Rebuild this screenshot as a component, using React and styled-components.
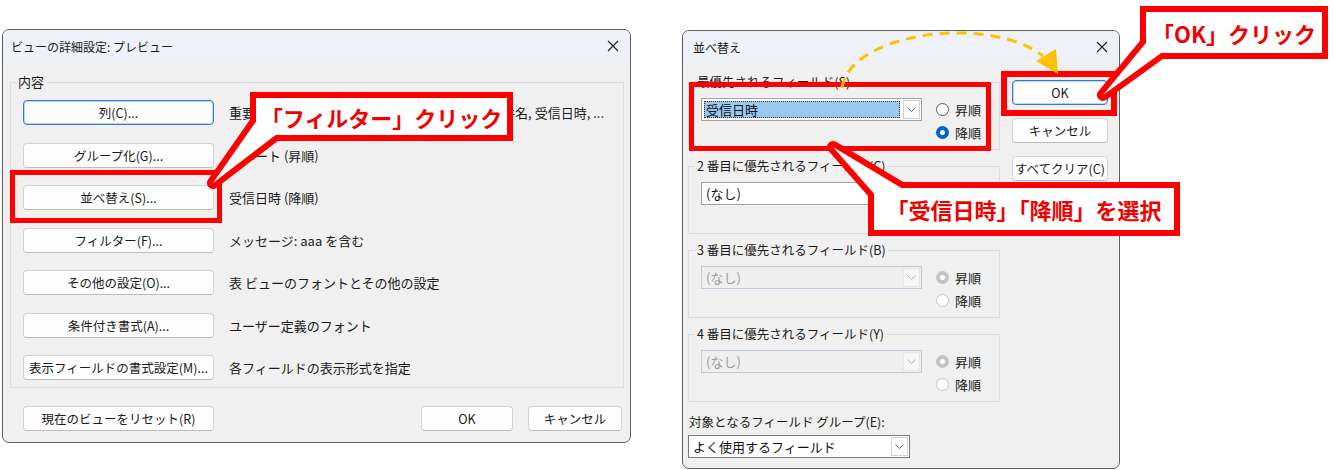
import React from 'react';
import styled, { createGlobalStyle } from 'styled-components';

const GlobalStyle = createGlobalStyle`
  html, body {
    margin: 0;
    padding: 0;
    background: #ffffff;
  }
  body {
    font-family: "Noto Sans CJK JP", "Noto Sans", sans-serif;
    font-size: 12px;
    color: #1a1a1a;
  }
`;

const Page = styled.div`
  position: relative;
  width: 1334px;
  height: 470px;
  overflow: hidden;
  box-sizing: border-box;
  display: flex;
  align-items: flex-start;
  gap: 51px;
  padding: 29px 0 0 2px;
`;

const Dialog = styled.div`
  width: ${p => p.$w}px;
  height: ${p => p.$h}px;
  margin-top: ${p => p.$top || 0}px;
  box-sizing: border-box;
  border: 1px solid #5f5f5f;
  border-radius: 7px;
  background: #f0f0f0;
  overflow: hidden;
  display: flex;
  flex-direction: column;
  flex: none;
`;

const TitleBar = styled.div`
  height: 32px;
  flex: none;
  display: flex;
  align-items: center;
  justify-content: space-between;
  padding: 0 11px 0 ${p => p.$pad || 8}px;
  background: #eef2f8;
  font-size: 12px;
  color: #1a1a1a;
`;

const CloseIcon = () => (
  <svg width="12" height="12" viewBox="0 0 12 12">
    <path d="M1 1 L11 11 M11 1 L1 11" stroke="#222" strokeWidth="1.1" fill="none" />
  </svg>
);

const Chevron = ({ color = '#666' }) => (
  <svg width="9" height="5" viewBox="0 0 9 5">
    <path d="M0.5 0.5 L4.5 4.5 L8.5 0.5" stroke={color} strokeWidth="1" fill="none" />
  </svg>
);

/* ---------- left dialog ---------- */

const ViewBody = styled.div`
  display: flex;
  flex-direction: column;
  padding: 12px 6px 0 7px;
`;

const GroupBox = styled.fieldset`
  margin: 0;
  padding: 0;
  min-width: 0;
  border: 1px solid #dcdcdc;
  width: ${p => (p.$w ? `${p.$w}px` : 'auto')};
  box-sizing: border-box;
`;

const Legend = styled.legend`
  margin-left: ${p => p.$indent || 5}px;
  padding: 0 2px;
  font-size: ${p => p.$size || 13}px;
  line-height: 16px;
  color: #1a1a1a;
`;

const SettingsGrid = styled.div`
  display: grid;
  grid-template-columns: 191px 1fr;
  grid-auto-rows: 25px;
  column-gap: 15px;
  row-gap: 17.5px;
  padding: 10px 8px 7px 12px;
`;

const PushButton = styled.div`
  width: ${p => (p.$w ? `${p.$w}px` : 'auto')};
  height: 25px;
  box-sizing: border-box;
  display: flex;
  align-items: center;
  justify-content: center;
  background: #fdfdfd;
  border: 1px solid ${p => (p.$default ? '#2f7fd0' : '#d3d3d3')};
  border-bottom-color: ${p => (p.$default ? '#2f7fd0' : '#bdbdbd')};
  box-shadow: ${p => (p.$default ? 'inset 0 0 0 1px #b9d5f1' : 'none')};
  border-radius: 4px;
  font-size: 12.5px;
  color: #1a1a1a;
  white-space: nowrap;
`;

const Description = styled.div`
  align-self: center;
  font-size: 13px;
  white-space: nowrap;
  overflow: hidden;
  color: #1a1a1a;
`;

const Footer = styled.div`
  display: flex;
  justify-content: space-between;
  margin-top: 18px;
  padding: 0 2px 0 13px;
`;

const FooterRight = styled.div`
  display: flex;
  gap: 15px;
`;

const settings = [
  { label: '列(C)...', desc: '重要度, フラグの状態, 添付ファイル, 差出人名, 件名, 受信日時, ...', focus: true },
  { label: 'グループ化(G)...', desc: 'レポート (昇順)' },
  { label: '並べ替え(S)...', desc: '受信日時 (降順)' },
  { label: 'フィルター(F)...', desc: 'メッセージ: aaa を含む' },
  { label: 'その他の設定(O)...', desc: '表 ビューのフォントとその他の設定' },
  { label: '条件付き書式(A)...', desc: 'ユーザー定義のフォント' },
  { label: '表示フィールドの書式設定(M)...', desc: '各フィールドの表示形式を指定' },
];

/* ---------- right dialog ---------- */

const SortBody = styled.div`
  display: flex;
  gap: 12px;
  padding: 11px 11px 0 5px;
`;

const SortColumn = styled.div`
  width: 312px;
  display: flex;
  flex-direction: column;
  gap: 8px;
`;

const SortRow = styled.div`
  display: flex;
  gap: 14px;
  padding: 8px 0 5px 12px;
`;

const Combo = styled.div`
  width: ${p => p.$w}px;
  height: 23px;
  box-sizing: border-box;
  flex: none;
  display: flex;
  align-items: stretch;
  border: 1px solid ${p => (p.$disabled ? '#bccadb' : p.$dark ? '#7a7a7a' : '#a3a3a3')};
  background: ${p => (p.$disabled ? '#efefef' : '#ffffff')};
  font-size: 13px;
  color: ${p => (p.$disabled ? '#9c9c9c' : '#111')};
`;

const ComboValue = styled.div`
  flex: 1;
  display: flex;
  align-items: center;
  padding: 2px;
  min-width: 0;
`;

const ComboText = styled.span`
  flex: 1;
  height: 100%;
  display: flex;
  align-items: center;
  padding-left: 2px;
  background: ${p => (p.$selected ? '#99c9ef' : 'transparent')};
  outline: ${p => (p.$selected ? '1px dotted #333' : 'none')};
  outline-offset: -1px;
  white-space: nowrap;
`;

const ComboArrow = styled.div`
  width: 17px;
  margin: 1px;
  box-sizing: border-box;
  display: flex;
  align-items: center;
  justify-content: center;
  border: 1px solid ${p => (p.$disabled ? '#e6e6e6' : '#d2d2d2')};
  background: ${p => (p.$disabled ? '#f6f6f6' : '#ffffff')};
`;

const RadioStack = styled.div`
  display: flex;
  flex-direction: column;
`;

const RadioItem = styled.div`
  height: 23px;
  display: flex;
  align-items: center;
  gap: 6px;
  font-size: 13px;
  color: #1a1a1a;
`;

const RadioMark = styled.span`
  width: 13px;
  height: 13px;
  box-sizing: border-box;
  border-radius: 50%;
  background: #ffffff;
  border: ${p =>
    p.$checked
      ? `4px solid ${p.$disabled ? '#c3c3c3' : '#0067c0'}`
      : `1px solid ${p.$disabled ? '#c6c6c6' : '#5e5e5e'}`};
`;

const ButtonColumn = styled.div`
  width: 96px;
  display: flex;
  flex-direction: column;
  gap: 13px;
  padding-top: 6px;
`;

const FieldBlock = styled.div`
  display: flex;
  flex-direction: column;
  gap: 4px;
  margin-top: 3px;
`;

const FieldLabel = styled.div`
  line-height: 18px;
  font-size: 12.5px;
  padding-left: 1px;
`;

const Dropdown = ({ value, width, selected, disabled, dark }) => (
  <Combo $w={width} $disabled={disabled} $dark={dark}>
    <ComboValue>
      <ComboText $selected={selected}>{value}</ComboText>
    </ComboValue>
    <ComboArrow $disabled={disabled}>
      <Chevron color={disabled ? '#b5b5b5' : '#666'} />
    </ComboArrow>
  </Combo>
);

const Radio = ({ label, checked, disabled }) => (
  <RadioItem>
    <RadioMark $checked={checked} $disabled={disabled} />
    {label}
  </RadioItem>
);

const sortGroups = [
  { title: '最優先されるフィールド(S)', value: '受信日時', selected: true, desc: true },
  { title: '2 番目に優先されるフィールド(C)', value: '(なし)', asc: true },
  { title: '3 番目に優先されるフィールド(B)', value: '(なし)', disabled: true, asc: true },
  { title: '4 番目に優先されるフィールド(Y)', value: '(なし)', disabled: true, asc: true },
];

/* ---------- annotations ---------- */

const Mark = styled.div`
  position: absolute;
  left: ${p => p.$x}px;
  top: ${p => p.$y}px;
  width: ${p => p.$w}px;
  height: ${p => p.$h}px;
  box-sizing: border-box;
  border: ${p => p.$t || 5}px solid #ff0000;
`;

const Overlay = styled.svg`
  position: absolute;
  left: 0;
  top: 0;
  width: 1334px;
  height: 470px;
  pointer-events: none;
`;

const CalloutText = styled.div`
  position: absolute;
  left: ${p => p.$x}px;
  top: ${p => p.$y}px;
  width: ${p => p.$w}px;
  height: ${p => p.$h}px;
  display: flex;
  align-items: center;
  justify-content: center;
  font-family: "Noto Sans CJK JP", sans-serif;
  font-weight: 700;
  font-size: 22px;
  color: #f20000;
  white-space: nowrap;
`;

const callouts = [
  {
    box: [250, 92, 513, 141],
    wedge: '262,113 290,124 213,183',
    text: '「フィルター」クリック',
  },
  {
    box: [868, 182, 1180, 236],
    wedge: '884,205 908,192 833,147',
    text: '「受信日時」「降順」を選択',
  },
  {
    box: [1140, 6, 1328, 59],
    wedge: '1155,32 1175,43 1103,95',
    text: '「OK」クリック',
  },
];

const B = 6;

const Annotations = () => (
  <>
    <Mark $x={10} $y={170} $w={212} $h={53} />
    <Mark $x={689} $y={82} $w={302} $h={69} />
    <Mark $x={1001} $y={71} $w={116} $h={45} $t={6} />
    <Overlay viewBox="0 0 1334 470">
      {callouts.map(c => {
        const [x1, y1, x2, y2] = c.box;
        return (
          <g key={c.text}>
            <rect x={x1 + B} y={y1 + B} width={x2 - x1 - 2 * B} height={y2 - y1 - 2 * B}
              fill="#ff0000" stroke="#ff0000" strokeWidth={2 * B} />
            <polygon points={c.wedge} fill="#ff0000" stroke="#ff0000" strokeWidth={2 * B}
              strokeLinejoin="round" />
            <rect x={x1 + B} y={y1 + B} width={x2 - x1 - 2 * B} height={y2 - y1 - 2 * B} fill="#ffffff" />
            <polygon points={c.wedge} fill="#ffffff" />
          </g>
        );
      })}
      <path d="M842 88 C 850 32, 990 14, 1043 56" fill="none" stroke="#ffc000"
        strokeWidth="3" strokeDasharray="10 7" />
      <polygon points="1036,61 1056,49 1058,74" fill="#ffc000" />
    </Overlay>
    {callouts.map(c => {
      const [x1, y1, x2, y2] = c.box;
      return (
        <CalloutText key={c.text} $x={x1} $y={y1} $w={x2 - x1} $h={y2 - y1}>
          {c.text}
        </CalloutText>
      );
    })}
  </>
);

export default function App() {
  return (
    <>
      <GlobalStyle />
      <Page>
        <Dialog $w={629} $h={414}>
          <TitleBar>
            <span>ビューの詳細設定: プレビュー</span>
            <CloseIcon />
          </TitleBar>
          <ViewBody>
            <GroupBox>
              <Legend>内容</Legend>
              <SettingsGrid>
                {settings.map(s => (
                  <React.Fragment key={s.label}>
                    <PushButton $default={s.focus}>{s.label}</PushButton>
                    <Description>{s.desc}</Description>
                  </React.Fragment>
                ))}
              </SettingsGrid>
            </GroupBox>
            <Footer>
              <PushButton $w={191}>現在のビューをリセット(R)</PushButton>
              <FooterRight>
                <PushButton $w={92}>OK</PushButton>
                <PushButton $w={94}>キャンセル</PushButton>
              </FooterRight>
            </Footer>
          </ViewBody>
        </Dialog>

        <Dialog $w={438} $h={439} $top={1}>
          <TitleBar $pad={10}>
            <span>並べ替え</span>
            <CloseIcon />
          </TitleBar>
          <SortBody>
            <SortColumn>
              {sortGroups.map(g => (
                <GroupBox key={g.title} $w={312}>
                  <Legend $indent={6} $size={12.5}>{g.title}</Legend>
                  <SortRow>
                    <Dropdown value={g.value} width={221} selected={g.selected} disabled={g.disabled} />
                    <RadioStack>
                      <Radio label="昇順" checked={g.asc} disabled={g.disabled} />
                      <Radio label="降順" checked={g.desc} disabled={g.disabled} />
                    </RadioStack>
                  </SortRow>
                </GroupBox>
              ))}
              <FieldBlock>
                <FieldLabel>対象となるフィールド グループ(E):</FieldLabel>
                <Dropdown value="よく使用するフィールド" width={222} dark />
              </FieldBlock>
            </SortColumn>
            <ButtonColumn>
              <PushButton $default>OK</PushButton>
              <PushButton>キャンセル</PushButton>
              <PushButton>すべてクリア(C)</PushButton>
            </ButtonColumn>
          </SortBody>
        </Dialog>
        <Annotations />
      </Page>
    </>
  );
}
